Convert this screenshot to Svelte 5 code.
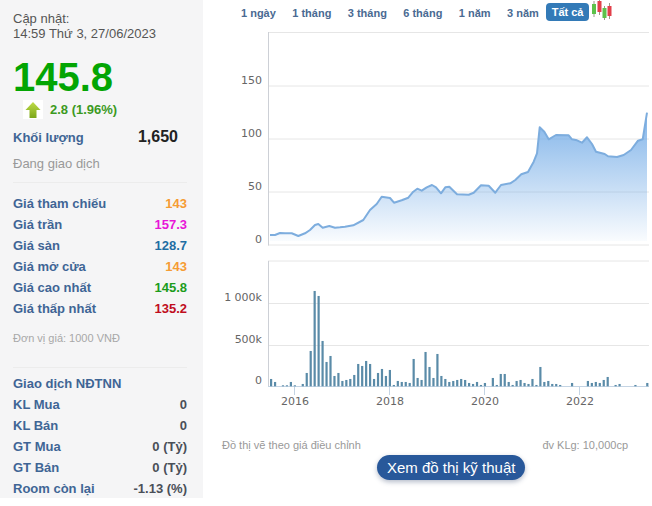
<script>
  const ranges = [
    { label: "1 ngày" },
    { label: "1 tháng" },
    { label: "3 tháng" },
    { label: "6 tháng" },
    { label: "1 năm" },
    { label: "3 năm" },
    { label: "Tất cả", active: true },
  ];

  const prices = [
    { label: "Giá tham chiếu", value: "143", color: "#f59c34" },
    { label: "Giá trần", value: "157.3", color: "#e815d8" },
    { label: "Giá sàn", value: "128.7", color: "#1f6da3" },
    { label: "Giá mở cửa", value: "143", color: "#f59c34" },
    { label: "Giá cao nhất", value: "145.8", color: "#1c9c1c" },
    { label: "Giá thấp nhất", value: "135.2", color: "#c00d1e" },
  ];

  const foreign = [
    { label: "KL Mua", value: "0" },
    { label: "KL Bán", value: "0" },
    { label: "GT Mua", value: "0 (Tỷ)" },
    { label: "GT Bán", value: "0 (Tỷ)" },
    { label: "Room còn lại", value: "-1.13 (%)" },
  ];

  // price line, page coordinates read off the chart
  const line = [
    [270, 235], [275, 235], [280, 233], [285, 233.3], [291.7, 233.3], [298.3, 236], [305, 233.3],
    [310, 230], [315, 225], [318.3, 224], [322.7, 227.7], [329.3, 226], [335, 227.7], [340, 227.3],
    [345, 226.7], [353.3, 225.3], [363.3, 220], [370, 210], [376.7, 204], [381.7, 196.7], [390, 198],
    [394, 202.7], [401.7, 200.3], [408.3, 197.7], [413.3, 191.7], [417.3, 188.7], [421.7, 190.7],
    [426.7, 187.3], [432, 185], [436, 187.3], [441, 193.3], [445.3, 187.3], [449.3, 186.7], [457, 194.3],
    [468.7, 194.7], [473.7, 192.7], [481, 185.3], [488.7, 185.7], [495.3, 192.7], [501, 185],
    [510.3, 183.3], [515.3, 180], [521.3, 174.3], [528, 172], [533.7, 161.7], [537, 153.3], [539.7, 127.3],
    [544.3, 131.7], [548.7, 139.3], [556, 135], [568.7, 135.3], [572, 139.3], [577, 140.3], [582, 142.7],
    [587, 137.3], [592, 144], [596, 151.7], [604.7, 154], [608, 156.3], [617, 157], [623.7, 155],
    [631, 150], [638, 140.7], [642.7, 139.3], [647, 112.7],
  ];

  const linePath = line.map((p) => p.join(",")).join(" ");
  const areaPath = `270,241 ${linePath} 647,241`;

  // top of each volume bar, measured at 3x from the axis at 394
  const volumeTops = [
    372, 381, 0, 391, 391, 381, 391, 0, 387, 354, 288, 108, 123, 258, 321, 303, 363, 354, 378, 375,
    372, 360, 327, 333, 318, 327, 372, 354, 342, 363, 345, 390, 378, 381, 381, 384, 312, 369, 375,
    291, 336, 369, 297, 363, 372, 381, 378, 375, 372, 375, 384, 387, 381, 390, 384, 0, 369, 390, 357,
    357, 381, 390, 378, 375, 384, 387, 372, 390, 336, 381, 378, 387, 387, 390, 0, 0, 384, 0, 0, 0,
    378, 384, 381, 384, 375, 366, 0, 390, 387, 0, 0, 0, 390, 0, 0, 384,
  ];

  const bars = volumeTops
    .map((top, i) => ({ x: 270 + i * 3.96, h: top ? (394 - top) / 3 : 0 }))
    .filter((b) => b.h > 0);

  const priceGrid = [
    { y: 32.5 },
    { y: 86, label: "150" },
    { y: 139, label: "100" },
    { y: 192, label: "50" },
  ];

  const volumeGrid = [
    { y: 261 },
    { y: 303.5, label: "1 000k" },
    { y: 345.5, label: "500k" },
  ];

  const years = [
    { x: 294.5, label: "2016" },
    { x: 389.5, label: "2018" },
    { x: 484.5, label: "2020" },
    { x: 579.5, label: "2022" },
  ];

  const candles = [
    { x: 597, wick: [1, 17], body: [4, 14], color: "#5cc24a" },
    { x: 602.5, wick: [0, 15], body: [1, 12], color: "#e2404a" },
    { x: 607.5, wick: [6, 20], body: [8, 18], color: "#5cc24a" },
    { x: 612.5, wick: [3, 19], body: [6, 16], color: "#e2404a" },
  ];
</script>

<div class="page">
  <aside class="side">
    <div class="updated">
      <div>Cập nhật:</div>
      <div>14:59 Thứ 3, 27/06/2023</div>
    </div>

    <div class="price">145.8</div>
    <div class="change">
      <svg class="arrow" width="20" height="19" viewBox="0 0 20 19">
        <defs>
          <linearGradient id="arrowFill" x1="0" y1="0" x2="0" y2="1">
            <stop offset="0" stop-color="#bfdc48" />
            <stop offset="1" stop-color="#7ba61a" />
          </linearGradient>
        </defs>
        <rect width="20" height="19" fill="#fff" />
        <path d="M10 2 L17.5 10 H13.5 V18 H6.5 V10 H2.5 Z" fill="url(#arrowFill)" />
      </svg>
      <span>2.8 (1.96%)</span>
    </div>

    <div class="volume">
      <span class="label">Khối lượng</span>
      <span class="volume-value">1,650</span>
    </div>
    <div class="status">Đang giao dịch</div>

    <div class="divider"></div>

    <div class="rows">
      {#each prices as row}
        <div class="row">
          <span class="label">{row.label}</span>
          <span style="color: {row.color}">{row.value}</span>
        </div>
      {/each}
    </div>
    <div class="unit">Đơn vị giá: 1000 VNĐ</div>

    <div class="divider second"></div>

    <div class="rows">
      <div class="row"><span class="label">Giao dịch NĐTNN</span></div>
      {#each foreign as row}
        <div class="row">
          <span class="label">{row.label}</span>
          <span class="plain">{row.value}</span>
        </div>
      {/each}
    </div>
  </aside>

  <main class="main">
    <nav class="tabs">
      {#each ranges as range}
        <span class="tab" class:active={range.active}>{range.label}</span>
      {/each}
      <svg class="candles" width="21" height="21" viewBox="595 0 21 21">
        {#each candles as c}
          <line x1={c.x} x2={c.x} y1={c.wick[0]} y2={c.wick[1]} stroke="#9a9a8a" />
          <rect x={c.x - 2} y={c.body[0]} width="4" height={c.body[1] - c.body[0]} fill={c.color} />
        {/each}
      </svg>
    </nav>

    <svg class="chart" width="449" height="388" viewBox="203 26 449 388">
      <defs>
        <linearGradient id="areaFill" x1="0" y1="112" x2="0" y2="241" gradientUnits="userSpaceOnUse">
          <stop offset="0" stop-color="#6fa9e6" stop-opacity="0.88" />
          <stop offset="1" stop-color="#6fa9e6" stop-opacity="0.04" />
        </linearGradient>
      </defs>

      {#each priceGrid as g}
        <line x1="268" x2="649" y1={g.y} y2={g.y} class="grid" />
        {#if g.label}
          <text x="262" y={g.y - 2} text-anchor="end" class="tick">{g.label}</text>
        {/if}
      {/each}
      <line x1="268" x2="649" y1="245" y2="245" class="grid" />
      <text x="262" y="243" text-anchor="end" class="tick">0</text>
      <line x1="268.5" x2="268.5" y1="32" y2="245.5" class="axis" />

      <polygon points={areaPath} fill="url(#areaFill)" />
      <polyline points={linePath} fill="none" stroke="#7dadde" stroke-width="2" stroke-linejoin="round" />

      {#each volumeGrid as g}
        <line x1="268" x2="649" y1={g.y} y2={g.y} class="grid" />
        <text x="262" y={g.y - 3} text-anchor="end" class="tick">{g.label}</text>
      {/each}
      <text x="262" y="384" text-anchor="end" class="tick">0</text>
      <line x1="268.5" x2="268.5" y1="261" y2="387" class="axis" />
      <line x1="268" x2="649" y1="386.5" y2="386.5" class="base" />

      {#each bars as b}
        <rect x={b.x} y={386.3 - b.h} width="2.2" height={b.h} fill="#5a8ba8" />
      {/each}

      {#each years as y}
        <line x1={y.x} x2={y.x} y1="387" y2="395" class="base" />
        <text x={y.x + 0.5} y="405" text-anchor="middle" class="tick">{y.label}</text>
      {/each}
    </svg>

    <div class="notes">
      <span>Đồ thị vẽ theo giá điều chỉnh</span>
      <span>đv KLg: 10,000cp</span>
    </div>
    <button class="tech">Xem đồ thị kỹ thuật</button>
  </main>
</div>

<style>
  :global(body) {
    background: #fff;
  }

  .page {
    display: flex;
    align-items: flex-start;
    width: 652px;
    height: 506px;
    overflow: hidden;
    font-family: "Liberation Sans", Arial, sans-serif;
  }

  .side {
    box-sizing: border-box;
    width: 203px;
    height: 498px;
    flex-shrink: 0;
    padding: 11px 16px 0 13px;
    background: #f5f5f6;
    overflow: hidden;
  }

  .updated {
    font-size: 13px;
    line-height: 15px;
    color: #555;
  }

  .price {
    margin-top: 13px;
    font-size: 40px;
    line-height: 46px;
    font-weight: bold;
    color: #03a503;
  }

  .change {
    display: flex;
    align-items: center;
    gap: 7px;
    height: 19px;
    margin-top: 0;
    padding-left: 10px;
    font-size: 13px;
    font-weight: bold;
    color: #3c9a1e;
  }

  .volume {
    display: flex;
    justify-content: space-between;
    align-items: center;
    height: 20px;
    margin-top: 8px;
    padding-right: 9px;
  }

  .label {
    font-weight: bold;
    color: #3f6595;
  }

  .volume .label {
    font-size: 13px;
  }

  .volume-value {
    font-size: 16px;
    font-weight: bold;
    color: #222;
  }

  .status {
    margin-top: 9px;
    font-size: 13px;
    line-height: 16px;
    color: #999;
  }

  .divider {
    height: 1px;
    margin: 10px 0 10px;
    background: #ececec;
  }

  .divider.second {
    margin: 22px 0 5px;
  }

  .row {
    display: flex;
    justify-content: space-between;
    align-items: center;
    height: 21px;
    font-size: 13px;
    font-weight: bold;
  }

  .plain {
    color: #4a4f58;
  }

  .unit {
    margin-top: 12px;
    font-size: 11px;
    line-height: 14px;
    color: #a8a8a8;
  }

  .main {
    position: relative;
    flex: 1;
    min-width: 0;
  }

  .tabs {
    display: flex;
    align-items: center;
    height: 26px;
    padding-left: 38px;
    font-size: 11px;
    font-weight: bold;
    color: #4a6a92;
    white-space: nowrap;
  }

  .tab {
    flex-shrink: 0;
    margin-right: 16.4px;
  }

  .tab.active {
    margin: -2px 3px 0 -9.5px;
    padding: 3px 6px;
    border-radius: 4px;
    background: #337ab7;
    color: #fff;
  }

  .candles {
    flex-shrink: 0;
    margin-top: -5px;
  }

  .chart {
    display: block;
  }

  .grid {
    stroke: #e6e6e6;
    stroke-width: 1;
  }

  .axis {
    stroke: #cdd0d6;
    stroke-width: 1;
  }

  .base {
    stroke: #c4d4e4;
    stroke-width: 1;
  }

  .tick {
    font-family: "DejaVu Sans", sans-serif;
    font-size: 11px;
    fill: #666;
  }

  .notes {
    display: flex;
    justify-content: space-between;
    width: 406px;
    margin: 24px 0 0 19px;
    font-size: 11px;
    line-height: 14px;
    color: #999;
  }

  .tech {
    display: block;
    height: 25px;
    margin: 3px 0 0 174px;
    padding: 0 10px;
    border: none;
    border-radius: 13px;
    background: #28589a;
    box-shadow: 0 2px 5px rgba(40, 60, 100, 0.35);
    font-family: "Liberation Sans", Arial, sans-serif;
    font-size: 15px;
    color: #fff;
  }
</style>
